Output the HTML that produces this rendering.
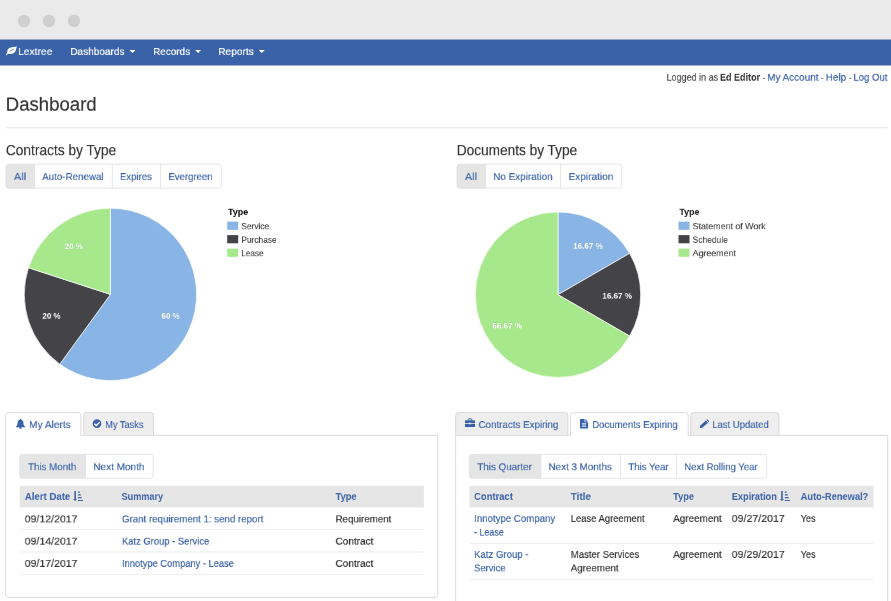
<!DOCTYPE html>
<html><head><meta charset="utf-8"><title>Dashboard</title>
<style>
html,body{margin:0;padding:0;background:#fff}
body{width:891px;height:601px;position:relative;overflow:hidden;font-family:"Liberation Sans", sans-serif}
div,svg,span{position:absolute;display:block}
span{left:0;top:0;white-space:pre;transform-origin:0 0;will-change:transform;-webkit-text-stroke:0.24px}
</style></head><body>
<svg style="left:0;top:0" width="891" height="601" viewBox="0 0 891 601">
<path d="M0.00 0.00H891.00V39.80H0.00V0.00Z" fill="#eaeaea"/>
<ellipse cx="24.0" cy="21.0" rx="6.2" ry="6.2" fill="#cfcfcf"/>
<ellipse cx="49.0" cy="21.0" rx="6.2" ry="6.2" fill="#cfcfcf"/>
<ellipse cx="74.0" cy="21.0" rx="6.2" ry="6.2" fill="#cfcfcf"/>
<path d="M0.00 39.60H891.00V65.40H0.00V39.60Z" fill="#3a62a9"/>
<path d="M763.00 77.90H765.20V78.80H763.00V77.90Z" fill="#666666"/>
<path d="M821.20 77.90H823.40V78.80H821.20V77.90Z" fill="#666666"/>
<path d="M849.10 77.90H851.30V78.80H849.10V77.90Z" fill="#666666"/>
<path d="M6.00 127.30H887.60V128.20H6.00V127.30Z" fill="#e3e3e3"/>
<path d="M8.70 164.20H218.70A2.8 2.8 0 0 1 221.50 167.00V185.40A2.8 2.8 0 0 1 218.70 188.20H8.70A2.8 2.8 0 0 1 5.90 185.40V167.00A2.8 2.8 0 0 1 8.70 164.20Z" fill="#fff"/>
<path d="M8.70 164.20H34.50V188.20H8.70A2.8 2.8 0 0 1 5.90 185.40V167.00A2.8 2.8 0 0 1 8.70 164.20Z" fill="#e5e5e5"/>
<path d="M8.70 164.20H218.70A2.8 2.8 0 0 1 221.50 167.00V185.40A2.8 2.8 0 0 1 218.70 188.20H8.70A2.8 2.8 0 0 1 5.90 185.40V167.00A2.8 2.8 0 0 1 8.70 164.20Z" fill="none" stroke="#dfdfdf" stroke-width="0.8"/>
<path d="M34.5 164.2V188.2" stroke="#dfdfdf" stroke-width="0.8"/>
<path d="M112.3 164.2V188.2" stroke="#dfdfdf" stroke-width="0.8"/>
<path d="M160.5 164.2V188.2" stroke="#dfdfdf" stroke-width="0.8"/>
<path d="M459.80 164.20H618.90A2.8 2.8 0 0 1 621.70 167.00V185.40A2.8 2.8 0 0 1 618.90 188.20H459.80A2.8 2.8 0 0 1 457.00 185.40V167.00A2.8 2.8 0 0 1 459.80 164.20Z" fill="#fff"/>
<path d="M459.80 164.20H485.60V188.20H459.80A2.8 2.8 0 0 1 457.00 185.40V167.00A2.8 2.8 0 0 1 459.80 164.20Z" fill="#e5e5e5"/>
<path d="M459.80 164.20H618.90A2.8 2.8 0 0 1 621.70 167.00V185.40A2.8 2.8 0 0 1 618.90 188.20H459.80A2.8 2.8 0 0 1 457.00 185.40V167.00A2.8 2.8 0 0 1 459.80 164.20Z" fill="none" stroke="#dfdfdf" stroke-width="0.8"/>
<path d="M485.6 164.2V188.2" stroke="#dfdfdf" stroke-width="0.8"/>
<path d="M560.5 164.2V188.2" stroke="#dfdfdf" stroke-width="0.8"/>
<path d="M227.20 221.60H238.20V229.80H227.20V221.60Z" fill="#89b5e6"/>
<path d="M227.20 235.10H238.20V243.30H227.20V235.10Z" fill="#434348"/>
<path d="M227.20 248.60H238.20V256.80H227.20V248.60Z" fill="#a6e88b"/>
<path d="M678.50 221.60H689.50V229.80H678.50V221.60Z" fill="#89b5e6"/>
<path d="M678.50 235.10H689.50V243.30H678.50V235.10Z" fill="#434348"/>
<path d="M678.50 248.60H689.50V256.80H678.50V248.60Z" fill="#a6e88b"/>
<path d="M5.60 435.30H437.70V594.50A2.8 2.8 0 0 1 434.90 597.30H8.40A2.8 2.8 0 0 1 5.60 594.50V435.30Z" fill="#fff"/>
<path d="M5.60 435.30H437.70V594.50A2.8 2.8 0 0 1 434.90 597.30H8.40A2.8 2.8 0 0 1 5.60 594.50V435.30Z" fill="none" stroke="#d2d2d2" stroke-width="0.8"/>
<path d="M8.40 412.60H78.00A2.8 2.8 0 0 1 80.80 415.40V435.90H5.60V415.40A2.8 2.8 0 0 1 8.40 412.60Z" fill="#fff"/>
<path d="M5.60 435.30V415.40A2.8 2.8 0 0 1 8.40 412.60H78.00A2.8 2.8 0 0 1 80.80 415.40V435.30" fill="none" stroke="#d2d2d2" stroke-width="0.8"/>
<path d="M86.60 412.60H150.70A2.8 2.8 0 0 1 153.50 415.40V434.90H83.80V415.40A2.8 2.8 0 0 1 86.60 412.60Z" fill="#eeeeee"/>
<path d="M83.80 434.90V415.40A2.8 2.8 0 0 1 86.60 412.60H150.70A2.8 2.8 0 0 1 153.50 415.40V434.90" fill="none" stroke="#d2d2d2" stroke-width="0.8"/>
<path d="M455.60 435.30H887.70V637.20A2.8 2.8 0 0 1 884.90 640.00H458.40A2.8 2.8 0 0 1 455.60 637.20V435.30Z" fill="#fff"/>
<path d="M455.60 435.30H887.70V637.20A2.8 2.8 0 0 1 884.90 640.00H458.40A2.8 2.8 0 0 1 455.60 637.20V435.30Z" fill="none" stroke="#d2d2d2" stroke-width="0.8"/>
<path d="M458.40 412.60H565.10A2.8 2.8 0 0 1 567.90 415.40V434.90H455.60V415.40A2.8 2.8 0 0 1 458.40 412.60Z" fill="#eeeeee"/>
<path d="M455.60 434.90V415.40A2.8 2.8 0 0 1 458.40 412.60H565.10A2.8 2.8 0 0 1 567.90 415.40V434.90" fill="none" stroke="#d2d2d2" stroke-width="0.8"/>
<path d="M573.30 412.60H685.40A2.8 2.8 0 0 1 688.20 415.40V435.90H570.50V415.40A2.8 2.8 0 0 1 573.30 412.60Z" fill="#fff"/>
<path d="M570.50 435.30V415.40A2.8 2.8 0 0 1 573.30 412.60H685.40A2.8 2.8 0 0 1 688.20 415.40V435.30" fill="none" stroke="#d2d2d2" stroke-width="0.8"/>
<path d="M693.50 412.60H776.10A2.8 2.8 0 0 1 778.90 415.40V434.90H690.70V415.40A2.8 2.8 0 0 1 693.50 412.60Z" fill="#eeeeee"/>
<path d="M690.70 434.90V415.40A2.8 2.8 0 0 1 693.50 412.60H776.10A2.8 2.8 0 0 1 778.90 415.40V434.90" fill="none" stroke="#d2d2d2" stroke-width="0.8"/>
<path d="M22.50 454.40H150.40A2.8 2.8 0 0 1 153.20 457.20V475.50A2.8 2.8 0 0 1 150.40 478.30H22.50A2.8 2.8 0 0 1 19.70 475.50V457.20A2.8 2.8 0 0 1 22.50 454.40Z" fill="#fff"/>
<path d="M22.50 454.40H85.40V478.30H22.50A2.8 2.8 0 0 1 19.70 475.50V457.20A2.8 2.8 0 0 1 22.50 454.40Z" fill="#e5e5e5"/>
<path d="M22.50 454.40H150.40A2.8 2.8 0 0 1 153.20 457.20V475.50A2.8 2.8 0 0 1 150.40 478.30H22.50A2.8 2.8 0 0 1 19.70 475.50V457.20A2.8 2.8 0 0 1 22.50 454.40Z" fill="none" stroke="#dfdfdf" stroke-width="0.8"/>
<path d="M85.4 454.4V478.29999999999995" stroke="#dfdfdf" stroke-width="0.8"/>
<path d="M472.20 454.40H763.90A2.8 2.8 0 0 1 766.70 457.20V475.50A2.8 2.8 0 0 1 763.90 478.30H472.20A2.8 2.8 0 0 1 469.40 475.50V457.20A2.8 2.8 0 0 1 472.20 454.40Z" fill="#fff"/>
<path d="M472.20 454.40H540.90V478.30H472.20A2.8 2.8 0 0 1 469.40 475.50V457.20A2.8 2.8 0 0 1 472.20 454.40Z" fill="#e5e5e5"/>
<path d="M472.20 454.40H763.90A2.8 2.8 0 0 1 766.70 457.20V475.50A2.8 2.8 0 0 1 763.90 478.30H472.20A2.8 2.8 0 0 1 469.40 475.50V457.20A2.8 2.8 0 0 1 472.20 454.40Z" fill="none" stroke="#dfdfdf" stroke-width="0.8"/>
<path d="M540.9 454.4V478.29999999999995" stroke="#dfdfdf" stroke-width="0.8"/>
<path d="M620.5 454.4V478.29999999999995" stroke="#dfdfdf" stroke-width="0.8"/>
<path d="M676.6 454.4V478.29999999999995" stroke="#dfdfdf" stroke-width="0.8"/>
<path d="M19.70 485.70H423.90V507.40H19.70V485.70Z" fill="#e6e6e6"/>
<path d="M19.70 529.30H423.90V530.10H19.70V529.30Z" fill="#eaeaea"/>
<path d="M19.70 551.60H423.90V552.40H19.70V551.60Z" fill="#eaeaea"/>
<path d="M19.70 573.90H423.90V574.70H19.70V573.90Z" fill="#eaeaea"/>
<path d="M469.40 485.70H873.60V507.40H469.40V485.70Z" fill="#e6e6e6"/>
<path d="M469.40 543.20H873.60V544.00H469.40V543.20Z" fill="#eaeaea"/>
<path d="M469.40 579.00H873.60V579.80H469.40V579.00Z" fill="#eaeaea"/>
<svg x="0" y="195" width="891" height="200" viewBox="0 0 891 200" overflow="visible"><path d="M110.45 99.39999999999998L110.45 13.20A86.2 86.2 0 1 1 59.78 169.14Z" fill="#89b5e6" stroke="#fff" stroke-width="0.7" stroke-linejoin="round"/><path d="M110.45 99.39999999999998L59.78 169.14A86.2 86.2 0 0 1 28.47 72.76Z" fill="#434348" stroke="#fff" stroke-width="0.7" stroke-linejoin="round"/><path d="M110.45 99.39999999999998L28.47 72.76A86.2 86.2 0 0 1 110.45 13.20Z" fill="#a6e88b" stroke="#fff" stroke-width="0.7" stroke-linejoin="round"/><path d="M558.0 99.69999999999999L558.00 17.00A82.7 82.7 0 0 1 629.62 58.35Z" fill="#89b5e6" stroke="#fff" stroke-width="0.7" stroke-linejoin="round"/><path d="M558.0 99.69999999999999L629.62 58.35A82.7 82.7 0 0 1 629.62 141.05Z" fill="#434348" stroke="#fff" stroke-width="0.7" stroke-linejoin="round"/><path d="M558.0 99.69999999999999L629.62 141.05A82.7 82.7 0 1 1 558.00 17.00Z" fill="#a6e88b" stroke="#fff" stroke-width="0.7" stroke-linejoin="round"/></svg>
<svg x="129.5" y="49.9" width="6" height="3.2" viewBox="0 0 6 3.2" overflow="visible"><path d="M0 0H6L3 3.2Z" fill="#fff"/></svg>
<svg x="195.1" y="49.9" width="6" height="3.2" viewBox="0 0 6 3.2" overflow="visible"><path d="M0 0H6L3 3.2Z" fill="#fff"/></svg>
<svg x="258.8" y="49.9" width="6" height="3.2" viewBox="0 0 6 3.2" overflow="visible"><path d="M0 0H6L3 3.2Z" fill="#fff"/></svg>
<svg x="6.0" y="45.7" width="11.5" height="9.5" viewBox="0 0 11.5 9.5" overflow="visible"><path d="M10.8 0.5C9.6 1.3 6.4 1.2 4.0 2.0C2.0 2.8 1.0 4.6 1.3 6.2C1.4 7.0 1.9 7.6 2.6 8.0C4.8 8.9 7.4 8.2 8.9 6.4C10.4 4.6 10.2 2.2 10.8 0.5Z" fill="#fff"/><path d="M0.6 8.9C1.0 8.0 1.6 7.4 2.4 6.8" stroke="#fff" stroke-width="1.1" fill="none" stroke-linecap="round"/><path d="M3.8 5.4C4.8 4.7 5.9 4.2 7.2 3.8" stroke="#3a62a9" stroke-width="0.8" fill="none" stroke-linecap="round"/></svg>
<svg x="15.5" y="418.65" width="10" height="10.4" viewBox="0 0 10 10.4" overflow="visible"><path d="M5 0.05C5.5 0.05 5.8 0.4 5.8 0.85V1.05C7.2 1.4 7.9 2.6 7.9 4.1C7.9 5.9 8.3 6.9 9.45 7.8V8.55H0.55V7.8C1.7 6.9 2.1 5.9 2.1 4.1C2.1 2.6 2.8 1.4 4.2 1.05V0.85C4.2 0.4 4.5 0.05 5 0.05Z" fill="#3a62a9"/><path d="M3.55 8.5H6.45C6.45 9.5 5.8 10.2 5 10.2C4.2 10.2 3.55 9.5 3.55 8.5Z" fill="#3a62a9"/></svg>
<svg x="92.15" y="418.84999999999997" width="9.7" height="9.7" viewBox="0 0 9.7 9.7" overflow="visible"><circle cx="4.85" cy="4.85" r="4.35" fill="#3a62a9"/><path d="M2.2499999999999996 4.85L4.1 6.699999999999999L7.449999999999999 3.3499999999999996" stroke="#fff" stroke-width="1.35" fill="none"/></svg>
<svg x="465" y="418.7" width="10" height="8.6" viewBox="0 0 10 8.6" overflow="visible"><path d="M3.3 1.7V0.8C3.3 0.4 3.6 0.1 4 0.1H6C6.4 0.1 6.7 0.4 6.7 0.8V1.7" stroke="#3a62a9" stroke-width="1.0" fill="none"/><path d="M0.7 1.5H9.3C9.7 1.5 10 1.8 10 2.2V4.3H6.2V4.0H3.8V4.3H0V2.2C0 1.8 0.3 1.5 0.7 1.5Z" fill="#3a62a9"/><path d="M0 5.0H3.8V5.6H6.2V5.0H10V7.7C10 8.1 9.7 8.4 9.3 8.4H0.7C0.3 8.4 0 8.1 0 7.7Z" fill="#3a62a9"/></svg>
<svg x="580" y="418.9" width="8.2" height="9.8" viewBox="0 0 8.2 9.8" overflow="visible"><path d="M0.5 0H4.6V2.9C4.6 3.2 4.8 3.4 5.1 3.4H8.1V9.2C8.1 9.5 7.9 9.7 7.6 9.7H0.5C0.2 9.7 0 9.5 0 9.2V0.5C0 0.2 0.2 0 0.5 0Z" fill="#3a62a9"/><path d="M5.3 0.1L8.0 2.8H5.3Z" fill="#3a62a9"/><path d="M1.9 4.7H6.1M1.9 6.1H6.1M1.9 7.5H6.1" stroke="#fff" stroke-width="0.75" fill="none"/></svg>
<svg x="699.6" y="419.45" width="9.6" height="8.9" viewBox="0 0 9.6 8.9" overflow="visible"><path d="M0.25 8.65L0.55 6.35L6.2 1.05L8.45 3.35L2.65 8.4Z" fill="#3a62a9"/><path d="M6.75 0.55L7.25 0.15C7.6 -0.1 8.0 -0.1 8.3 0.2L9.2 1.2C9.5 1.5 9.5 1.9 9.2 2.25L8.85 2.65Z" fill="#3a62a9"/></svg>
<svg x="73.2" y="490.6" width="10.4" height="11" viewBox="0 0 10.4 11" overflow="visible"><path d="M1.1 0.4H2.7V8.3H4.0L1.9 10.5L-0.2 8.3H1.1Z" fill="#3a62a9"/><path d="M4.7 1.0H6.6V2.1H4.7ZM4.7 3.75H7.6V4.85H4.7ZM4.7 6.5H8.6V7.6H4.7ZM4.7 9.3H9.8V10.4H4.7Z" fill="#3a62a9"/></svg>
<svg x="780.1" y="490.6" width="10.4" height="11" viewBox="0 0 10.4 11" overflow="visible"><path d="M1.1 0.4H2.7V8.3H4.0L1.9 10.5L-0.2 8.3H1.1Z" fill="#3a62a9"/><path d="M4.7 1.0H6.6V2.1H4.7ZM4.7 3.75H7.6V4.85H4.7ZM4.7 6.5H8.6V7.6H4.7ZM4.7 9.3H9.8V10.4H4.7Z" fill="#3a62a9"/></svg>
</svg>
<span style="font-size:14.01px;line-height:16.81px;font-weight:400;color:#fff;transform:translate(18.06px,45.96px) scale(0.7362,0.696);">Lextree</span>
<span style="font-size:14.01px;line-height:16.81px;font-weight:400;color:#fff;transform:translate(70.26px,45.96px) scale(0.7176,0.696);">Dashboards</span>
<span style="font-size:14.01px;line-height:16.81px;font-weight:400;color:#fff;transform:translate(153.16px,45.96px) scale(0.7074,0.696);">Records</span>
<span style="font-size:14.01px;line-height:16.81px;font-weight:400;color:#fff;transform:translate(218.26px,45.96px) scale(0.7216,0.696);">Reports</span>
<span style="font-size:14.01px;line-height:16.81px;font-weight:400;color:#555;transform:translate(666.56px,71.66px) scale(0.6420,0.696);">Logged in as</span>
<span style="font-size:14.01px;line-height:16.81px;font-weight:700;color:#333;-webkit-text-stroke:0;transform:translate(719.96px,71.66px) scale(0.6441,0.696);">Ed Editor</span>
<span style="font-size:14.01px;line-height:16.81px;font-weight:400;color:#3c64aa;transform:translate(767.16px,71.66px) scale(0.7086,0.696);">My Account</span>
<span style="font-size:14.01px;line-height:16.81px;font-weight:400;color:#3c64aa;transform:translate(825.76px,71.66px) scale(0.7078,0.696);">Help</span>
<span style="font-size:14.01px;line-height:16.81px;font-weight:400;color:#3c64aa;transform:translate(853.46px,71.66px) scale(0.6800,0.696);">Log Out</span>
<span style="font-size:27.59px;line-height:33.10px;font-weight:400;color:#333;transform:translate(5.64px,92.60px) scale(0.6748,0.696);">Dashboard</span>
<span style="font-size:21.55px;line-height:25.86px;font-weight:400;color:#333;transform:translate(5.83px,141.37px) scale(0.6369,0.696);">Contracts by Type</span>
<span style="font-size:21.55px;line-height:25.86px;font-weight:400;color:#333;transform:translate(456.82px,141.37px) scale(0.6333,0.696);">Documents by Type</span>
<span style="font-size:14.01px;line-height:16.81px;font-weight:400;color:#3c64aa;transform:translate(13.86px,171.06px) scale(0.7892,0.696);">All</span>
<span style="font-size:14.01px;line-height:16.81px;font-weight:400;color:#3c64aa;transform:translate(42.16px,171.06px) scale(0.6992,0.696);">Auto-Renewal</span>
<span style="font-size:14.01px;line-height:16.81px;font-weight:400;color:#3c64aa;transform:translate(119.96px,171.06px) scale(0.6829,0.696);">Expires</span>
<span style="font-size:14.01px;line-height:16.81px;font-weight:400;color:#3c64aa;transform:translate(168.46px,171.06px) scale(0.6825,0.696);">Evergreen</span>
<span style="font-size:14.01px;line-height:16.81px;font-weight:400;color:#3c64aa;transform:translate(464.96px,171.06px) scale(0.7700,0.696);">All</span>
<span style="font-size:14.01px;line-height:16.81px;font-weight:400;color:#3c64aa;transform:translate(493.26px,171.06px) scale(0.7065,0.696);">No Expiration</span>
<span style="font-size:14.01px;line-height:16.81px;font-weight:400;color:#3c64aa;transform:translate(568.56px,171.06px) scale(0.7192,0.696);">Expiration</span>
<span style="font-size:11.49px;line-height:13.79px;font-weight:700;color:#fff;-webkit-text-stroke:0;transform:translate(161.49px,311.69px) scale(0.6896,0.696);text-shadow:0 0 2px rgba(0,0,0,.18)">60 %</span>
<span style="font-size:11.49px;line-height:13.79px;font-weight:700;color:#fff;-webkit-text-stroke:0;transform:translate(42.39px,311.69px) scale(0.6896,0.696);text-shadow:0 0 2px rgba(0,0,0,.18)">20 %</span>
<span style="font-size:11.49px;line-height:13.79px;font-weight:700;color:#fff;-webkit-text-stroke:0;transform:translate(64.69px,242.09px) scale(0.6896,0.696);text-shadow:0 0 2px rgba(0,0,0,.18)">20 %</span>
<span style="font-size:11.49px;line-height:13.79px;font-weight:700;color:#fff;-webkit-text-stroke:0;transform:translate(573.14px,241.69px) scale(0.7012,0.696);text-shadow:0 0 2px rgba(0,0,0,.18)">16.67 %</span>
<span style="font-size:11.49px;line-height:13.79px;font-weight:700;color:#fff;-webkit-text-stroke:0;transform:translate(602.34px,291.59px) scale(0.7012,0.696);text-shadow:0 0 2px rgba(0,0,0,.18)">16.67 %</span>
<span style="font-size:11.49px;line-height:13.79px;font-weight:700;color:#fff;-webkit-text-stroke:0;transform:translate(492.34px,321.49px) scale(0.7012,0.696);text-shadow:0 0 2px rgba(0,0,0,.18)">66.67 %</span>
<span style="font-size:12.21px;line-height:14.66px;font-weight:700;color:#111;-webkit-text-stroke:0;transform:translate(228.02px,207.30px) scale(0.7323,0.696);">Type</span>
<span style="font-size:12.21px;line-height:14.66px;font-weight:400;color:#3a3a3a;transform:translate(241.32px,221.60px) scale(0.6829,0.696);-webkit-text-stroke:0.12px;">Service</span>
<span style="font-size:12.21px;line-height:14.66px;font-weight:400;color:#3a3a3a;transform:translate(241.32px,235.10px) scale(0.6845,0.696);-webkit-text-stroke:0.12px;">Purchase</span>
<span style="font-size:12.21px;line-height:14.66px;font-weight:400;color:#3a3a3a;transform:translate(241.32px,248.60px) scale(0.6675,0.696);-webkit-text-stroke:0.12px;">Lease</span>
<span style="font-size:12.21px;line-height:14.66px;font-weight:700;color:#111;-webkit-text-stroke:0;transform:translate(679.32px,207.30px) scale(0.7323,0.696);">Type</span>
<span style="font-size:12.21px;line-height:14.66px;font-weight:400;color:#3a3a3a;transform:translate(692.62px,221.60px) scale(0.7238,0.696);-webkit-text-stroke:0.12px;">Statement of Work</span>
<span style="font-size:12.21px;line-height:14.66px;font-weight:400;color:#3a3a3a;transform:translate(692.62px,235.10px) scale(0.6935,0.696);-webkit-text-stroke:0.12px;">Schedule</span>
<span style="font-size:12.21px;line-height:14.66px;font-weight:400;color:#3a3a3a;transform:translate(692.62px,248.60px) scale(0.7252,0.696);-webkit-text-stroke:0.12px;">Agreement</span>
<span style="font-size:14.01px;line-height:16.81px;font-weight:400;color:#3c64aa;transform:translate(29.06px,419.06px) scale(0.7239,0.696);">My Alerts</span>
<span style="font-size:14.01px;line-height:16.81px;font-weight:400;color:#3c64aa;transform:translate(105.16px,419.06px) scale(0.6590,0.696);">My Tasks</span>
<span style="font-size:14.01px;line-height:16.81px;font-weight:400;color:#3c64aa;transform:translate(478.56px,419.06px) scale(0.6975,0.696);">Contracts Expiring</span>
<span style="font-size:14.01px;line-height:16.81px;font-weight:400;color:#3c64aa;transform:translate(592.26px,419.06px) scale(0.6815,0.696);">Documents Expiring</span>
<span style="font-size:14.01px;line-height:16.81px;font-weight:400;color:#3c64aa;transform:translate(712.26px,419.06px) scale(0.6781,0.696);">Last Updated</span>
<span style="font-size:14.01px;line-height:16.81px;font-weight:400;color:#3c64aa;transform:translate(28.06px,461.21px) scale(0.6958,0.696);">This Month</span>
<span style="font-size:14.01px;line-height:16.81px;font-weight:400;color:#3c64aa;transform:translate(93.26px,461.21px) scale(0.7149,0.696);">Next Month</span>
<span style="font-size:14.01px;line-height:16.81px;font-weight:400;color:#3c64aa;transform:translate(477.36px,461.21px) scale(0.7002,0.696);">This Quarter</span>
<span style="font-size:14.01px;line-height:16.81px;font-weight:400;color:#3c64aa;transform:translate(548.56px,461.21px) scale(0.7011,0.696);">Next 3 Months</span>
<span style="font-size:14.01px;line-height:16.81px;font-weight:400;color:#3c64aa;transform:translate(628.36px,461.21px) scale(0.6884,0.696);">This Year</span>
<span style="font-size:14.01px;line-height:16.81px;font-weight:400;color:#3c64aa;transform:translate(684.26px,461.21px) scale(0.6832,0.696);">Next Rolling Year</span>
<span style="font-size:14.01px;line-height:16.81px;font-weight:700;color:#3a62a9;-webkit-text-stroke:0;transform:translate(24.86px,490.86px) scale(0.6862,0.696);">Alert Date</span>
<span style="font-size:14.01px;line-height:16.81px;font-weight:700;color:#3a62a9;-webkit-text-stroke:0;transform:translate(121.56px,490.86px) scale(0.6516,0.696);">Summary</span>
<span style="font-size:14.01px;line-height:16.81px;font-weight:700;color:#3a62a9;-webkit-text-stroke:0;transform:translate(335.56px,490.86px) scale(0.6663,0.696);">Type</span>
<span style="font-size:14.01px;line-height:16.81px;font-weight:400;color:#333;transform:translate(24.76px,513.36px) scale(0.7518,0.696);">09/12/2017</span>
<span style="font-size:14.01px;line-height:16.81px;font-weight:400;color:#3c64aa;transform:translate(121.96px,513.36px) scale(0.6934,0.696);">Grant requirement 1: send report</span>
<span style="font-size:14.01px;line-height:16.81px;font-weight:400;color:#333;transform:translate(335.56px,513.36px) scale(0.6959,0.696);">Requirement</span>
<span style="font-size:14.01px;line-height:16.81px;font-weight:400;color:#333;transform:translate(24.76px,535.56px) scale(0.7518,0.696);">09/14/2017</span>
<span style="font-size:14.01px;line-height:16.81px;font-weight:400;color:#3c64aa;transform:translate(121.96px,535.56px) scale(0.6717,0.696);">Katz Group - Service</span>
<span style="font-size:14.01px;line-height:16.81px;font-weight:400;color:#333;transform:translate(335.56px,535.56px) scale(0.7139,0.696);">Contract</span>
<span style="font-size:14.01px;line-height:16.81px;font-weight:400;color:#333;transform:translate(24.76px,557.76px) scale(0.7518,0.696);">09/17/2017</span>
<span style="font-size:14.01px;line-height:16.81px;font-weight:400;color:#3c64aa;transform:translate(121.96px,557.76px) scale(0.6661,0.696);">Innotype Company - Lease</span>
<span style="font-size:14.01px;line-height:16.81px;font-weight:400;color:#333;transform:translate(335.56px,557.76px) scale(0.7139,0.696);">Contract</span>
<span style="font-size:14.01px;line-height:16.81px;font-weight:700;color:#3a62a9;-webkit-text-stroke:0;transform:translate(474.06px,490.86px) scale(0.6737,0.696);">Contract</span>
<span style="font-size:14.01px;line-height:16.81px;font-weight:700;color:#3a62a9;-webkit-text-stroke:0;transform:translate(570.76px,490.86px) scale(0.7074,0.696);">Title</span>
<span style="font-size:14.01px;line-height:16.81px;font-weight:700;color:#3a62a9;-webkit-text-stroke:0;transform:translate(673.16px,490.86px) scale(0.6600,0.696);">Type</span>
<span style="font-size:14.01px;line-height:16.81px;font-weight:700;color:#3a62a9;-webkit-text-stroke:0;transform:translate(731.76px,490.86px) scale(0.6584,0.696);">Expiration</span>
<span style="font-size:14.01px;line-height:16.81px;font-weight:700;color:#3a62a9;-webkit-text-stroke:0;transform:translate(800.66px,490.86px) scale(0.6633,0.696);">Auto-Renewal?</span>
<span style="font-size:14.01px;line-height:16.81px;font-weight:400;color:#3c64aa;transform:translate(474.06px,512.86px) scale(0.6907,0.696);">Innotype Company</span>
<span style="font-size:14.01px;line-height:16.81px;font-weight:400;color:#3c64aa;transform:translate(474.06px,526.56px) scale(0.6356,0.696);">- Lease</span>
<span style="font-size:14.01px;line-height:16.81px;font-weight:400;color:#333;transform:translate(570.76px,512.86px) scale(0.6732,0.696);">Lease Agreement</span>
<span style="font-size:14.01px;line-height:16.81px;font-weight:400;color:#333;transform:translate(673.16px,512.86px) scale(0.7094,0.696);">Agreement</span>
<span style="font-size:14.01px;line-height:16.81px;font-weight:400;color:#333;transform:translate(731.76px,512.86px) scale(0.7560,0.696);">09/27/2017</span>
<span style="font-size:14.01px;line-height:16.81px;font-weight:400;color:#333;transform:translate(800.66px,512.86px) scale(0.6602,0.696);">Yes</span>
<span style="font-size:14.01px;line-height:16.81px;font-weight:400;color:#3c64aa;transform:translate(474.06px,548.76px) scale(0.6864,0.696);">Katz Group -</span>
<span style="font-size:14.01px;line-height:16.81px;font-weight:400;color:#3c64aa;transform:translate(474.06px,562.36px) scale(0.6743,0.696);">Service</span>
<span style="font-size:14.01px;line-height:16.81px;font-weight:400;color:#333;transform:translate(570.76px,548.76px) scale(0.6834,0.696);">Master Services</span>
<span style="font-size:14.01px;line-height:16.81px;font-weight:400;color:#333;transform:translate(570.76px,562.36px) scale(0.6992,0.696);">Agreement</span>
<span style="font-size:14.01px;line-height:16.81px;font-weight:400;color:#333;transform:translate(673.16px,548.76px) scale(0.7094,0.696);">Agreement</span>
<span style="font-size:14.01px;line-height:16.81px;font-weight:400;color:#333;transform:translate(731.76px,548.76px) scale(0.7560,0.696);">09/29/2017</span>
<span style="font-size:14.01px;line-height:16.81px;font-weight:400;color:#333;transform:translate(800.66px,548.76px) scale(0.6602,0.696);">Yes</span>
</body></html>
